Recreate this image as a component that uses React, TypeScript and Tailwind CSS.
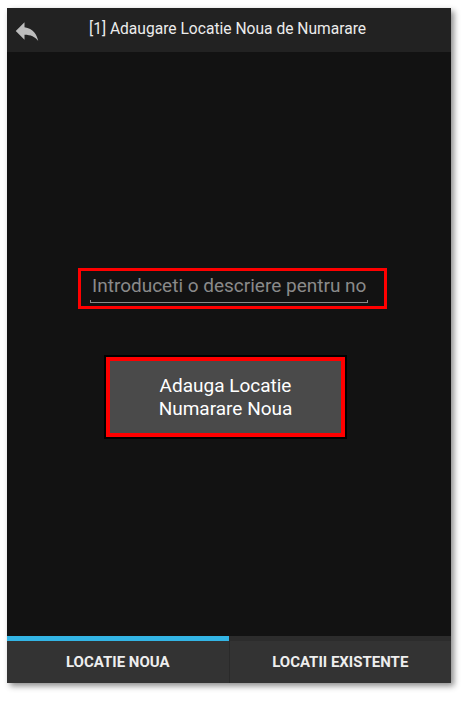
import { useState } from "react";

function ReplyIcon() {
  return (
    <svg viewBox="0 0 24 24" className="h-[30px] w-[30px]" fill="#bdbdbd">
      <path d="M10 9V5l-7 7 7 7v-4.1c5 0 8.5 1.6 11 5.1-1-5-4-10-11-11z" />
    </svg>
  );
}

export default function App() {
  const [text, setText] = useState("");
  const [tab, setTab] = useState(0);

  return (
    <div
      className="h-[707px] w-[465px] overflow-hidden bg-white pl-[7px] pt-[8px]"
      style={{ fontFamily: "Roboto, 'Liberation Sans', sans-serif" }}
    >
      <div className="flex h-[675px] w-[444px] flex-col bg-[#121212] shadow-[3px_3px_6px_rgba(0,0,0,0.45)]">
        {/* Header */}
        <div className="flex h-[44px] items-center bg-[#222222]">
          <div className="flex w-[40px] items-center justify-center pt-[1px]">
            <ReplyIcon />
          </div>
          <div className="ml-[42px] text-[15.6px] text-[#ececec]">
            [1] Adaugare Locatie Noua de Numarare
          </div>
        </div>

        {/* Body */}
        <div className="flex flex-1 flex-col pt-[216px]">
          <div className="ml-[71px] h-[41px] w-[309px] border-[3px] border-[#ff0000] pl-[9px] pr-[16px] pt-[2px]">
            <input
              value={text}
              onChange={(e) => setText(e.target.value)}
              placeholder="Introduceti o descriere pentru noua locatie"
              className="h-[27px] w-full bg-transparent px-[2px] text-[19px] text-[#dddddd] outline-none placeholder:text-[#8a8a8a]"
            />
            <div className="h-[3px] border-x border-b border-[#8a8a8a]" />
          </div>

          <button className="ml-[99px] mt-[48px] flex h-[80px] w-[239px] flex-col items-center justify-center border-4 border-[#ff0000] bg-[#4a4a4a] text-[19px] leading-[23px] text-white shadow-[0_0_0_2px_#000]">
            <span>Adauga Locatie</span>
            <span>Numarare Noua</span>
          </button>
        </div>

        {/* Tabs */}
        <div className="flex h-[47px] bg-[#333333]">
          {["LOCATIE NOUA", "LOCATII EXISTENTE"].map((label, i) => (
            <button
              key={label}
              onClick={() => setTab(i)}
              className={`flex flex-1 flex-col ${i === 0 ? "border-r border-[#2a2a2a]" : ""}`}
            >
              <div className={`h-[5px] w-full ${tab === i ? "bg-[#33b5e5]" : "bg-[#2c2c2c]"}`} />
              <div className="flex flex-1 items-center justify-center text-[15px] font-bold text-[#eeeeee]">
                {label}
              </div>
            </button>
          ))}
        </div>
      </div>
    </div>
  );
}
